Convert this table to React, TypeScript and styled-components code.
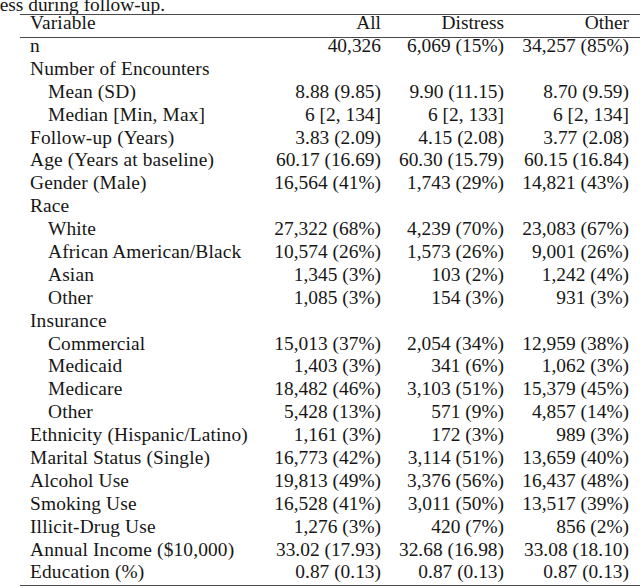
import React from 'react';
import styled, { createGlobalStyle } from 'styled-components';

const GlobalStyle = createGlobalStyle`
  html, body {
    margin: 0;
    padding: 0;
    background: #ffffff;
    overflow: hidden;
  }
  body {
    font-family: 'Liberation Serif', 'DejaVu Serif', serif;
    color: #161616;
  }
`;

interface TableRow {
  label: string;
  indent?: boolean;
  all?: string;
  distress?: string;
  other?: string;
}

const rows: TableRow[] = [
  { label: 'n', all: '40,326', distress: '6,069 (15%)', other: '34,257 (85%)' },
  { label: 'Number of Encounters' },
  { label: 'Mean (SD)', indent: true, all: '8.88 (9.85)', distress: '9.90 (11.15)', other: '8.70 (9.59)' },
  { label: 'Median [Min, Max]', indent: true, all: '6 [2, 134]', distress: '6 [2, 133]', other: '6 [2, 134]' },
  { label: 'Follow-up (Years)', all: '3.83 (2.09)', distress: '4.15 (2.08)', other: '3.77 (2.08)' },
  { label: 'Age (Years at baseline)', all: '60.17 (16.69)', distress: '60.30 (15.79)', other: '60.15 (16.84)' },
  { label: 'Gender (Male)', all: '16,564 (41%)', distress: '1,743 (29%)', other: '14,821 (43%)' },
  { label: 'Race' },
  { label: 'White', indent: true, all: '27,322 (68%)', distress: '4,239 (70%)', other: '23,083 (67%)' },
  { label: 'African American/Black', indent: true, all: '10,574 (26%)', distress: '1,573 (26%)', other: '9,001 (26%)' },
  { label: 'Asian', indent: true, all: '1,345 (3%)', distress: '103 (2%)', other: '1,242 (4%)' },
  { label: 'Other', indent: true, all: '1,085 (3%)', distress: '154 (3%)', other: '931 (3%)' },
  { label: 'Insurance' },
  { label: 'Commercial', indent: true, all: '15,013 (37%)', distress: '2,054 (34%)', other: '12,959 (38%)' },
  { label: 'Medicaid', indent: true, all: '1,403 (3%)', distress: '341 (6%)', other: '1,062 (3%)' },
  { label: 'Medicare', indent: true, all: '18,482 (46%)', distress: '3,103 (51%)', other: '15,379 (45%)' },
  { label: 'Other', indent: true, all: '5,428 (13%)', distress: '571 (9%)', other: '4,857 (14%)' },
  { label: 'Ethnicity (Hispanic/Latino)', all: '1,161 (3%)', distress: '172 (3%)', other: '989 (3%)' },
  { label: 'Marital Status (Single)', all: '16,773 (42%)', distress: '3,114 (51%)', other: '13,659 (40%)' },
  { label: 'Alcohol Use', all: '19,813 (49%)', distress: '3,376 (56%)', other: '16,437 (48%)' },
  { label: 'Smoking Use', all: '16,528 (41%)', distress: '3,011 (50%)', other: '13,517 (39%)' },
  { label: 'Illicit-Drug Use', all: '1,276 (3%)', distress: '420 (7%)', other: '856 (2%)' },
  { label: 'Annual Income ($10,000)', all: '33.02 (17.93)', distress: '32.68 (16.98)', other: '33.08 (18.10)' },
  { label: 'Education (%)', all: '0.87 (0.13)', distress: '0.87 (0.13)', other: '0.87 (0.13)' },
];

const Page = styled.div`
  width: 640px;
  height: 588px;
  overflow: hidden;
  font-size: 19.4px;
`;

// caption is cut at the left edge, only its tail shows
const Caption = styled.div`
  margin-top: -5px;
  width: 165px;
  height: 19px;
  line-height: 19px;
  display: flex;
  justify-content: flex-end;
  overflow: hidden;
  white-space: nowrap;
`;

const Table = styled.div`
  margin-left: 20px;
  width: 620px;
  border-top: 1.5px solid #4a4a4a;
`;

const Row = styled.div<{ $header?: boolean; $last?: boolean }>`
  display: grid;
  grid-template-columns: 250px 111px 123px 125px 11px;
  height: ${({ $header, $last }) => ($header ? '22px' : $last ? '21px' : '22.9px')};
  line-height: ${({ $header }) => ($header ? '15px' : '16.9px')};
  border-bottom: ${({ $header, $last }) =>
    $header || $last ? '1.3px solid #4a4a4a' : 'none'};
  white-space: nowrap;
`;

const Label = styled.div<{ $indent?: boolean }>`
  padding-left: ${({ $indent }) => ($indent ? '28px' : '10px')};
  letter-spacing: 0.15px;
`;

const Value = styled.div`
  text-align: right;
`;

export default function App() {
  return (
    <Page>
      <GlobalStyle />
      <Caption>
        <span>distress during follow-up.</span>
      </Caption>
      <Table>
        <Row $header>
          <Label>Variable</Label>
          <Value>All</Value>
          <Value>Distress</Value>
          <Value>Other</Value>
          <div />
        </Row>
        {rows.map((r, i) => (
          <Row key={i} $last={i === rows.length - 1}>
            <Label $indent={r.indent}>{r.label}</Label>
            <Value>{r.all}</Value>
            <Value>{r.distress}</Value>
            <Value>{r.other}</Value>
            <div />
          </Row>
        ))}
      </Table>
    </Page>
  );
}
